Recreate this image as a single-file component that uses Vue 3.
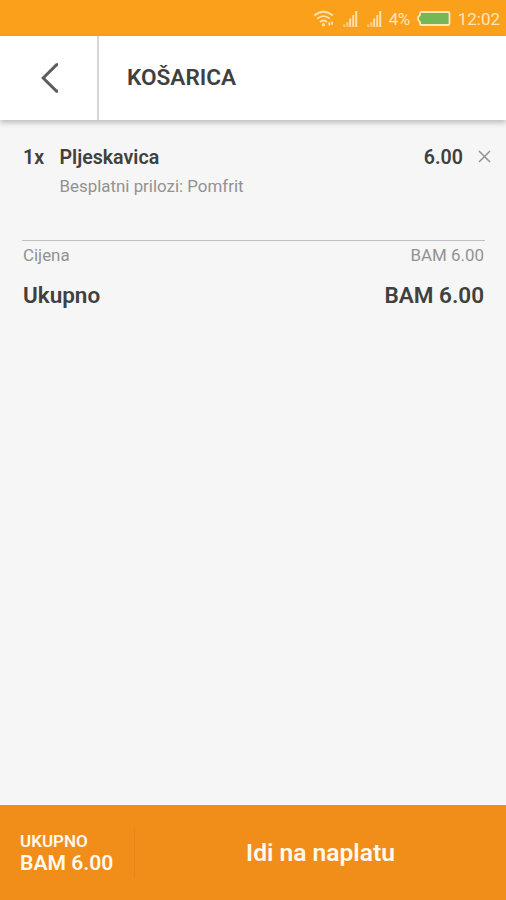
<script setup>
const item = { quantity: '1x', name: 'Pljeskavica', extras: 'Besplatni prilozi: Pomfrit', price: '6.00' }
const total = 'BAM 6.00'
</script>

<template>
  <div class="screen">
    <div class="status">
      <svg class="wifi" width="22" height="20" viewBox="0 0 22 20">
        <path d="M1.2 6.5Q10.5-1 19.8 6.5M4.2 9.8Q10.5 4.5 16.8 9.8M7 13Q10.5 10 14 13" />
        <circle cx="10.5" cy="15.7" r="1.7" />
        <path class="arrows" d="M16.3 13.2v3.3M19 12.5v3.3" />
      </svg>
      <svg class="signal first" width="15" height="18" viewBox="0 0 15 18">
        <path class="dim" d="M1.3 14.5V17M4.3 12V17" /><path d="M7.2 8.5V17M10.2 5V17M13.2 1V17" />
      </svg>
      <svg class="signal second" width="15" height="18" viewBox="0 0 15 18">
        <path class="dim" d="M1.3 14.5V17M4.3 12V17" /><path d="M7.2 8.5V17M10.2 5V17M13.2 1V17" />
      </svg>
      <span class="percent">4%</span>
      <svg class="battery" width="34" height="16" viewBox="0 0 34 16">
        <path d="M4.5 1H31Q32.5 1 32.5 2.5V12.5Q32.5 14 31 14H4.5Q3 14 3 12.5V11L1.2 9V6L3 4V2.5Q3 1 4.5 1Z" />
      </svg>
      <span class="clock">12:02</span>
    </div>

    <header class="bar">
      <button class="back" aria-label="Nazad">
        <svg width="20" height="30" viewBox="0 0 20 30"><path d="M19 1.7H17.6L4.2 15 17.6 28.3H19" /></svg>
      </button>
      <h1>KOŠARICA</h1>
    </header>

    <main>
      <div class="item">
        <span class="qty">{{ item.quantity }}</span>
        <div class="details">
          <div class="name">{{ item.name }}</div>
          <div class="extras">{{ item.extras }}</div>
        </div>
        <span class="price">{{ item.price }}</span>
        <svg class="remove" width="13" height="13" viewBox="0 0 13 13"><path d="M1 1 12 12M12 1 1 12" /></svg>
      </div>
      <div class="summary">
        <div class="row sub"><span>Cijena</span><span>{{ total }}</span></div>
        <div class="row total"><span>Ukupno</span><span class="amount">{{ total }}</span></div>
      </div>
    </main>

    <footer>
      <div class="foot-total">
        <span class="label">UKUPNO</span>
        <span class="value">{{ total }}</span>
      </div>
      <button class="checkout"><span>Idi na naplatu</span></button>
    </footer>
  </div>
</template>

<style>
body { margin: 0; }
</style>

<style scoped>
.screen {
  width: 506px;
  height: 900px;
  display: flex;
  flex-direction: column;
  background: #f6f6f6;
  font-family: Roboto, sans-serif;
  color: #404040;
  white-space: nowrap;
  overflow: hidden;
}
button { border: 0; padding: 0; background: none; font: inherit; color: inherit; }
svg { display: block; fill: none; flex: none; }
.status {
  box-sizing: border-box;
  height: 36px;
  flex: none;
  display: flex;
  align-items: center;
  justify-content: flex-end;
  padding: 1px 6px 0 0;
  background: #faa01b;
  color: #ffe6b8;
}
.wifi { stroke: #ffdfaa; stroke-width: 1.8; margin-right: 8px; }
.wifi circle { fill: #ffdfaa; stroke: none; }
.signal { stroke: #ffdfaa; stroke-width: 2; }
.signal .dim { stroke: #fdcc80; }
.first { margin-right: 9px; }
.second { margin-right: 6.5px; }
.percent { font-size: 17px; letter-spacing: -.5px; margin-right: 7px; }
.battery { stroke: #ffe8b4; stroke-width: 1.8; fill: #75b657; margin-right: 7px; }
.clock { font-size: 17px; }
.bar {
  height: 84px;
  flex: none;
  display: flex;
  align-items: center;
  background: #fff;
  box-shadow: 0 3px 5px rgba(0, 0, 0, .22);
}
.back {
  box-sizing: border-box;
  width: 99px;
  height: 84px;
  padding-left: 39px;
  display: flex;
  align-items: center;
  border-right: 2px solid #d6d6d6;
}
.back path { stroke: #5c5c5c; stroke-width: 3; }
h1 { margin: 0 0 0 28px; font-size: 22.6px; line-height: 26px; font-weight: 600; }
main { flex: 1; padding: 24px 21px 0 22px; }
.item { display: flex; align-items: flex-start; height: 96px; font-weight: 600; font-size: 19.6px; line-height: 27px; }
.qty { width: 37.5px; padding-left: 1px; box-sizing: border-box; }
.details { flex: 1; }
.extras { font-weight: 400; font-size: 16.9px; line-height: 22px; margin-top: 4px; color: #929292; }
.price { margin-right: 15px; }
.remove { margin: 6px -6px 0 0; stroke: #929292; stroke-width: 1.5; }
.summary { border-top: 1px solid #bfbfbf; padding: 3px 1px 0 1px; }
.row { display: flex; justify-content: space-between; }
.sub { font-size: 16.9px; line-height: 22px; color: #929292; }
.total { font-size: 22.5px; line-height: 28px; margin-top: 15px; font-weight: 600; }
footer {
  height: 95px;
  flex: none;
  display: flex;
  align-items: center;
  background: #f08e19;
  color: #fff9ef;
  font-weight: 600;
}
.foot-total {
  box-sizing: border-box;
  width: 135px;
  height: 50px;
  padding: 3px 0 0 20px;
  display: flex;
  flex-direction: column;
  border-right: 1px solid #e58618;
}
.label { font-size: 17px; line-height: 21px; }
.value { font-size: 21.1px; line-height: 22px; }
.checkout { flex: 1; text-align: center; font-size: 24.6px; line-height: 30px; }
</style>
